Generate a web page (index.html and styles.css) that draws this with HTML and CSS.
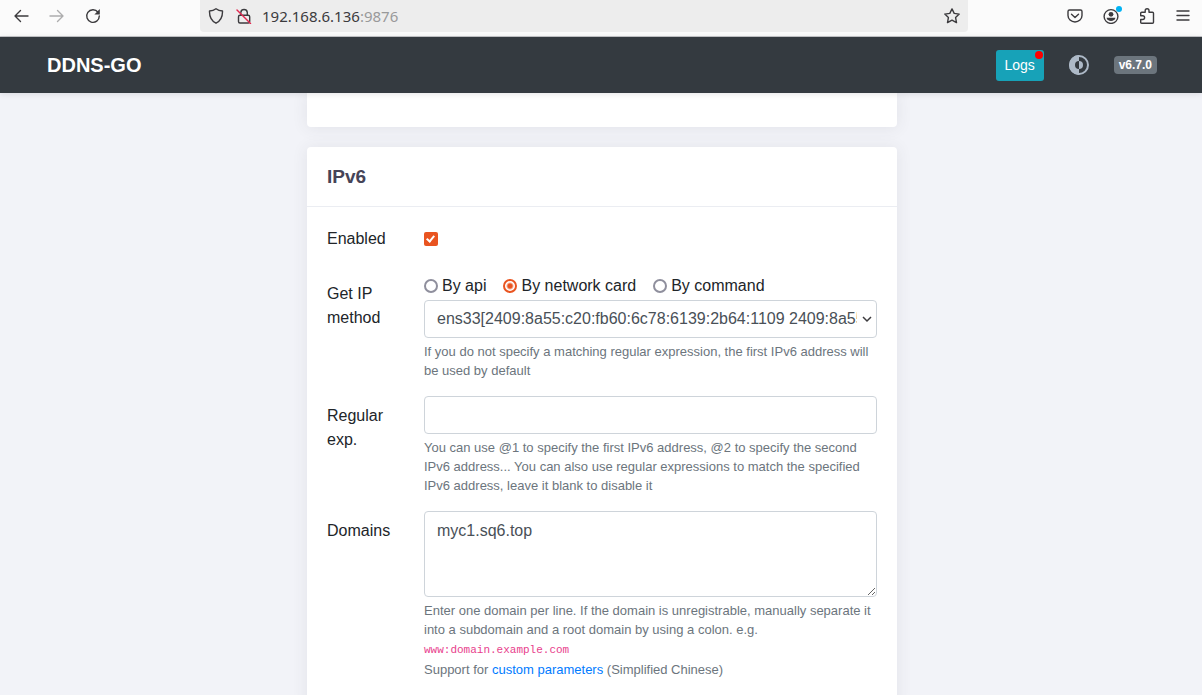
FILE: index.html
```
<!DOCTYPE html>
<html lang="en">

<head>
  <meta charset="UTF-8">
  <title>DDNS-GO</title>
  <meta name="viewport" content="width=device-width, initial-scale=1">
  <link rel="stylesheet" href="styles.css">
</head>

<body>
  <div class="toolbar">
    <div class="toolbar-left">
      <button type="button" class="tool" aria-label="Back">
        <svg viewBox="0 0 16 16"><path d="M15 8H2M7.500 2.500L2 8l5.500 5.500" /></svg>
      </button>
      <button type="button" class="tool tool-off" aria-label="Forward">
        <svg viewBox="0 0 16 16"><path d="M1 8h13M8.500 2.500L14 8l-5.500 5.500" /></svg>
      </button>
      <button type="button" class="tool" aria-label="Reload">
        <svg viewBox="0 0 16 16"><path d="M13 4.200A6.300 6.300 0 1 0 14.300 8" /><path class="solid" d="M14.800 1v5.400H9.400z" /></svg>
      </button>
    </div>
    <div class="urlbar">
      <button type="button" class="tool tool-small" aria-label="Tracking protection">
        <svg viewBox="0 0 16 16"><path d="M8 .8C6 2.300 3.800 2.900 1.500 3c-.2 5.800 1.500 9.700 6.500 12.200C13 12.700 14.700 8.800 14.500 3 12.200 2.900 10 2.300 8 .8z" /></svg>
      </button>
      <button type="button" class="tool tool-small" aria-label="Connection not secure">
        <svg viewBox="0 0 16 16"><path d="M4.800 7V4.300a3.300 3.300 0 0 1 6.500 0V7M4 7.200h8.200a1.500 1.500 0 0 1 1.500 1.500v4.800a1.500 1.500 0 0 1-1.500 1.500H4a1.500 1.500 0 0 1-1.500-1.500V8.700A1.500 1.500 0 0 1 4 7.200z" /><path class="strike" d="M1 2l13.500 13.500" /></svg>
      </button>
      <div class="url">192.168.6.136<span>:9876</span></div>
      <button type="button" class="tool tool-small" aria-label="Bookmark this page">
        <svg viewBox="0 0 16 16"><path d="M8 .9l2.200 4.500 5 .7-3.600 3.500.9 5L8 12.200l-4.500 2.400.9-5L.8 6.100l5-.7z" /></svg>
      </button>
    </div>
    <div class="toolbar-right">
      <button type="button" class="tool" aria-label="Pocket">
        <svg viewBox="0 0 16 16"><path d="M2.500 2h11A1.500 1.500 0 0 1 15 3.500V7.500a7 6.500 0 0 1-14 0V3.500A1.500 1.500 0 0 1 2.500 2zM4.500 6.200L8 9.500l3.500-3.300" /></svg>
      </button>
      <button type="button" class="tool tool-account" aria-label="Account">
        <svg viewBox="0 0 16 16"><circle cx="8" cy="8.500" r="6.900" /><circle class="solid" cx="8" cy="6.300" r="2.400" /><path class="solid" d="M3.600 9.800h8.800c0 4.200-8.800 4.200-8.800 0z" /></svg>
      </button>
      <button type="button" class="tool" aria-label="Extensions">
        <svg viewBox="0 0 16 16"><path d="M6.200 4.200V2.600a1.900 1.900 0 0 1 3.800 0v1.600h3.500c.6 0 1 .4 1 1v9c0 .6-.4 1-1 1H2.700c-.6 0-1-.4-1-1v-2.700h2a1.900 1.900 0 0 0 0-3.800h-2V5.200c0-.6.400-1 1-1z" /></svg>
      </button>
      <button type="button" class="tool" aria-label="Menu">
        <svg viewBox="0 0 16 16"><path d="M2 3h12M2 7.500h12M2 12h12" /></svg>
      </button>
    </div>
  </div>

  <header class="navbar">
    <a class="brand" href="#">DDNS-GO</a>
    <button type="button" class="btn-logs">Logs</button>
    <button type="button" class="btn-theme" aria-label="Switch theme">
      <svg viewBox="0 0 20 20">
        <circle class="ring" cx="10" cy="10" r="9" />
        <path class="half" d="M10 0a10 10 0 0 0 0 20z" />
        <path class="core" d="M10 6a4 4 0 0 0 0 8z" />
        <path class="half" d="M10 6a4 4 0 0 1 0 8z" />
      </svg>
    </button>
    <span class="badge">v6.7.0</span>
  </header>

  <main>
    <section class="card card-prev"></section>

    <section class="card">
      <h5 class="card-title">IPv6</h5>
      <form class="card-body">
        <div class="row">
          <label for="ipv6-enable">Enabled</label>
          <div class="check-line">
            <input type="checkbox" id="ipv6-enable" checked>
          </div>
        </div>

        <div class="row">
          <label for="ipv6-netif">Get IP method</label>
          <div>
            <div class="radios">
              <label><input type="radio" name="gettype" value="url">By api</label>
              <label><input type="radio" name="gettype" value="netInterface" checked>By network card</label>
              <label><input type="radio" name="gettype" value="cmd">By command</label>
            </div>
            <div class="select">
              <select class="form-control" id="ipv6-netif">
                <option>ens33[2409:8a55:c20:fb60:6c78:6139:2b64:1109 2409:8a55:c20:fb60]</option>
              </select>
              <svg viewBox="0 0 10 10"><path d="M1 3l4 4 4-4" /></svg>
            </div>
            <small>If you do not specify a matching regular expression, the first IPv6 address will be used by default</small>
          </div>
        </div>

        <div class="row">
          <label for="ipv6-reg">Regular exp.</label>
          <div>
            <input class="form-control" type="text" id="ipv6-reg">
            <small>You can use @1 to specify the first IPv6 address, @2 to specify the second IPv6 address... You can also use regular expressions to match the specified IPv6 address, leave it blank to disable it</small>
          </div>
        </div>

        <div class="row">
          <label for="ipv6-domains">Domains</label>
          <div>
            <textarea class="form-control" id="ipv6-domains" rows="3" spellcheck="false">myc1.sq6.top</textarea>
            <small>Enter one domain per line. If the domain is unregistrable, manually separate it into a subdomain and a root domain by using a colon. e.g. <code>www:domain.example.com</code><br>Support for <a href="#">custom parameters</a> (Simplified Chinese)</small>
          </div>
        </div>
      </form>
    </section>
  </main>
</body>

</html>
```
FILE: styles.css
```
* {
  box-sizing: border-box;
}

body {
  display: flex;
  flex-direction: column;
  height: 100vh;
  margin: 0;
  background: #f2f3f8;
  color: #212529;
  font-family: "Liberation Sans", Arial, sans-serif;
  font-size: 16px;
  line-height: 24px;
}

button {
  border: none;
  padding: 0;
  background: none;
  font-family: inherit;
  cursor: pointer;
}

svg {
  display: block;
  fill: none;
}

/* browser toolbar */
.toolbar {
  display: flex;
  flex-shrink: 0;
  height: 37px;
  padding-bottom: 4px;
  background: #fbfbfb;
  border-bottom: 1px solid #c4c5c8;
}

.toolbar-left {
  display: flex;
  width: 200px;
  padding-left: 3px;
}

.toolbar-right {
  display: flex;
  justify-content: flex-end;
  width: 234px;
  padding-right: 1px;
}

.tool {
  position: relative;
  display: flex;
  align-items: center;
  justify-content: center;
  width: 36px;
  height: 32px;
  color: #3c3b3e;
}

.tool-small {
  width: 28px;
}

.tool-off {
  color: #adadae;
}

.tool svg {
  width: 16px;
  height: 16px;
  stroke: currentColor;
  stroke-width: 1.4;
  stroke-linejoin: round;
  stroke-linecap: round;
}

.tool .solid {
  fill: currentColor;
  stroke: none;
}

.tool .strike {
  stroke: #e22850;
}

.tool-account::after {
  content: "";
  position: absolute;
  top: 6px;
  right: 7px;
  width: 6px;
  height: 6px;
  border-radius: 50%;
  background: #00b3f4;
}

.urlbar {
  display: flex;
  flex: 1;
  align-items: center;
  padding: 0 2px;
  background: #ededed;
  border-radius: 0 0 4px 4px;
}

.url {
  flex: 1;
  padding-left: 4px;
  color: #3c3b3e;
  font-family: "Noto Sans", sans-serif;
  font-size: 15px;
}

.url span {
  color: #99999a;
}

/* navbar */
.navbar {
  position: relative;
  z-index: 1;
  display: flex;
  flex-shrink: 0;
  align-items: center;
  gap: 25px;
  height: 56px;
  padding: 0 45px 0 47px;
  background: #343a40;
  box-shadow: 0 1px 6px rgba(69, 65, 78, 0.15);
}

.brand {
  margin-right: auto;
  color: #fff;
  font-size: 20px;
  font-weight: bold;
  text-decoration: none;
}

.btn-logs {
  position: relative;
  width: 48px;
  height: 31px;
  border-radius: 3px;
  background: #17a2b8;
  color: #fff;
  font-size: 14px;
}

.btn-logs::after {
  content: "";
  position: absolute;
  top: 1px;
  right: 1px;
  width: 8px;
  height: 8px;
  border-radius: 50%;
  background: #f00;
}

.btn-theme svg {
  width: 20px;
  height: 20px;
}

.btn-theme .ring {
  stroke: #adb9c7;
  stroke-width: 2;
}

.btn-theme .half {
  fill: #adb9c7;
}

.btn-theme .core {
  fill: #343a40;
}

.badge {
  padding: 0 5px;
  border-radius: 4px;
  background: #6c757d;
  color: #fff;
  font-size: 12px;
  font-weight: bold;
  line-height: 18px;
}

/* cards */
main {
  flex: 1;
  min-height: 0;
  overflow: hidden;
  padding: 0 10px 0 12px;
}

.card {
  max-width: 590px;
  margin: 0 auto 20px;
  background: #fff;
  border-radius: 4px;
  box-shadow: 0 1px 15px 1px rgba(69, 65, 78, 0.08);
}

.card-prev {
  height: 34px;
  border-radius: 0 0 4px 4px;
}

.card-title {
  margin: 0;
  padding: 18px 20px 17px;
  border-bottom: 1px solid #ebedf2;
  color: #464457;
  font-size: 19px;
  font-weight: bold;
}

.card-body {
  padding: 12px 20px;
}

.row {
  display: grid;
  grid-template-columns: 67px 1fr;
  gap: 30px;
  margin-bottom: 16px;
}

.row > label {
  padding: 8px 0 7px;
}

.check-line {
  display: flex;
  align-items: center;
}

input[type="checkbox"],
input[type="radio"] {
  appearance: none;
  flex-shrink: 0;
  width: 14px;
  height: 14px;
  margin: 0;
}

input[type="checkbox"] {
  position: relative;
  border-radius: 2px;
  background: #e95420;
}

input[type="checkbox"]:checked::after {
  content: "";
  position: absolute;
  top: 2px;
  left: 4px;
  width: 3px;
  height: 6px;
  border: solid #fff;
  border-width: 0 2px 2px 0;
  transform: rotate(40deg);
}

input[type="radio"] {
  border: 2px solid #8f8f9d;
  border-radius: 50%;
}

input[type="radio"]:checked {
  border-color: #e95420;
  background: radial-gradient(circle, #e95420 2px, #fff 4px);
}

.radios {
  display: flex;
  gap: 17px;
  padding-bottom: 2px;
}

.radios label {
  display: flex;
  align-items: center;
  gap: 4px;
}

.form-control {
  display: block;
  width: 100%;
  height: 38px;
  padding: 6px 12px;
  border: 1px solid #ced4da;
  border-radius: 4px;
  background: #fff;
  color: #495057;
  font-family: inherit;
  font-size: 16px;
  line-height: 24px;
}

textarea.form-control {
  height: 86px;
  padding-top: 7px;
}

.select {
  position: relative;
}

.select select {
  appearance: none;
  padding-right: 19px;
}

.select svg {
  position: absolute;
  top: 14px;
  right: 5px;
  width: 10px;
  height: 10px;
  stroke: #3c3b3e;
  stroke-width: 1.5;
  pointer-events: none;
}

small {
  display: block;
  margin-top: 4px;
  color: #6c757d;
  font-size: 13px;
  line-height: 19px;
}

small a {
  color: #007bff;
  text-decoration: none;
}

code {
  color: #e83e8c;
  font-family: "Liberation Mono", monospace;
  font-size: 11px;
}
```
